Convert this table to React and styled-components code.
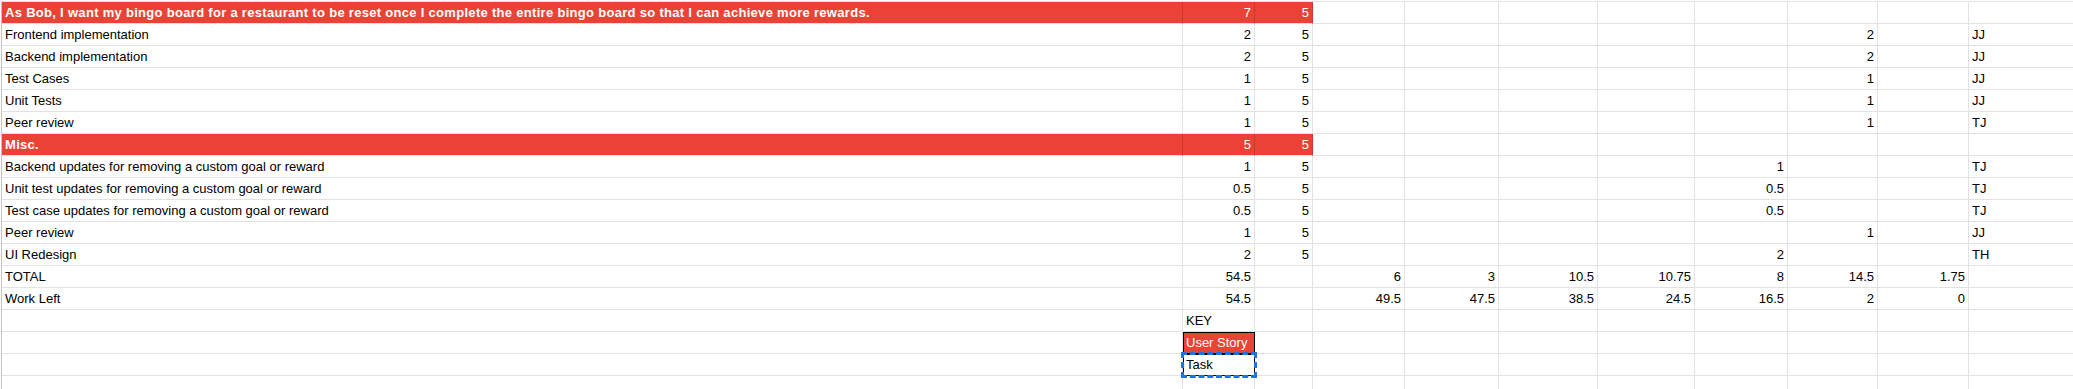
import React from 'react';
import styled, { createGlobalStyle } from 'styled-components';

const GlobalStyle = createGlobalStyle`
	html, body {
		margin: 0;
		padding: 0;
		background: #ffffff;
		overflow: hidden;
	}
`;

const COLS = [1181, 72, 58, 92, 94, 99, 97, 93, 90, 91, 110];

const story = (label, b, c) => ({ kind: 'story', cells: [label, b, c] });
const task = (label, b, c, extra = {}) => ({
	kind: 'task',
	cells: [label, b, c, '', '', '', '', extra.h || '', extra.i || '', '', extra.k || ''],
});

const rows = [
	story(
		'As Bob, I want my bingo board for a restaurant to be reset once I complete the entire bingo board so that I can achieve more rewards.',
		'7',
		'5'
	),
	task('Frontend implementation', '2', '5', { i: '2', k: 'JJ' }),
	task('Backend implementation', '2', '5', { i: '2', k: 'JJ' }),
	task('Test Cases', '1', '5', { i: '1', k: 'JJ' }),
	task('Unit Tests', '1', '5', { i: '1', k: 'JJ' }),
	task('Peer review', '1', '5', { i: '1', k: 'TJ' }),
	story('Misc.', '5', '5'),
	task('Backend updates for removing a custom goal or reward', '1', '5', { h: '1', k: 'TJ' }),
	task('Unit test updates for removing a custom goal or reward', '0.5', '5', { h: '0.5', k: 'TJ' }),
	task('Test case updates for removing a custom goal or reward', '0.5', '5', { h: '0.5', k: 'TJ' }),
	task('Peer review', '1', '5', { i: '1', k: 'JJ' }),
	task('UI Redesign', '2', '5', { h: '2', k: 'TH' }),
	{ kind: 'plain', cells: ['TOTAL', '54.5', '', '6', '3', '10.5', '10.75', '8', '14.5', '1.75', ''] },
	{ kind: 'plain', cells: ['Work Left', '54.5', '', '49.5', '47.5', '38.5', '24.5', '16.5', '2', '0', ''] },
	{ kind: 'key', cells: ['', 'KEY'] },
	{ kind: 'keyStory', cells: ['', 'User Story'] },
	{ kind: 'keyTask', cells: ['', 'Task'] },
	{ kind: 'plain', cells: [] },
];

const isNumber = (v) => /^-?\d+(\.\d+)?$/.test(v);

export default function App() {
	return (
		<>
			<GlobalStyle />
			<Sheet>
				{rows.map((row, r) => (
					<Row key={r}>
						{COLS.map((w, c) => {
							const value = row.cells[c] || '';
							const red = row.kind === 'story' && c < 3;
							const keyCell = c === 1 && (row.kind === 'keyStory' || row.kind === 'keyTask');
							return (
								<Cell
									key={c}
									$w={w}
									$red={red || (c === 1 && row.kind === 'keyStory')}
									$bold={row.kind === 'story' && c === 0}
									$right={isNumber(value)}
									$boxed={keyCell}
								>
									<CellText $bold={row.kind === 'story' && c === 0}>{value}</CellText>
									{c === 1 && row.kind === 'keyTask' && <Marquee />}
								</Cell>
							);
						})}
					</Row>
				))}
			</Sheet>
		</>
	);
}

const Sheet = styled.div`
	margin: 1px 0 0 1px;
	border-top: 1px solid #e2e2e2;
	border-left: 1px solid #c4c4c4;
	font-family: Arial, 'Liberation Sans', sans-serif;
	font-size: 13px;
	color: #000000;
`;

const Row = styled.div`
	display: flex;
	height: 22px;
`;

const Cell = styled.div`
	position: relative;
	flex: 0 0 ${(p) => p.$w}px;
	box-sizing: border-box;
	height: 22px;
	display: flex;
	align-items: flex-end;
	justify-content: ${(p) => (p.$right ? 'flex-end' : 'flex-start')};
	padding: 0 3px 3px 3px;
	border-right: 1px solid ${(p) => (p.$red ? '#c9392d' : '#e2e2e2')};
	border-bottom: 1px solid #e2e2e2;
	background: ${(p) => (p.$red ? '#ea4335' : 'transparent')};
	color: ${(p) => (p.$red ? '#ffffff' : '#000000')};
	font-weight: ${(p) => (p.$bold ? 700 : 400)};
	white-space: nowrap;
	overflow: ${(p) => (p.$bold || p.$boxed ? 'visible' : 'hidden')};
	z-index: ${(p) => (p.$bold ? 1 : 0)};
	${(p) =>
		p.$boxed &&
		`
		outline: 1px solid #000000;
		outline-offset: -1px;
		z-index: 2;
	`}
`;

const CellText = styled.span`
	line-height: 15px;
	letter-spacing: ${(p) => (p.$bold ? '0.3px' : '0')};
`;

const Marquee = styled.div`
	position: absolute;
	left: -2px;
	top: -2px;
	right: -3px;
	bottom: -3px;
	border: 3px dashed #1a73e8;
	pointer-events: none;
`;
